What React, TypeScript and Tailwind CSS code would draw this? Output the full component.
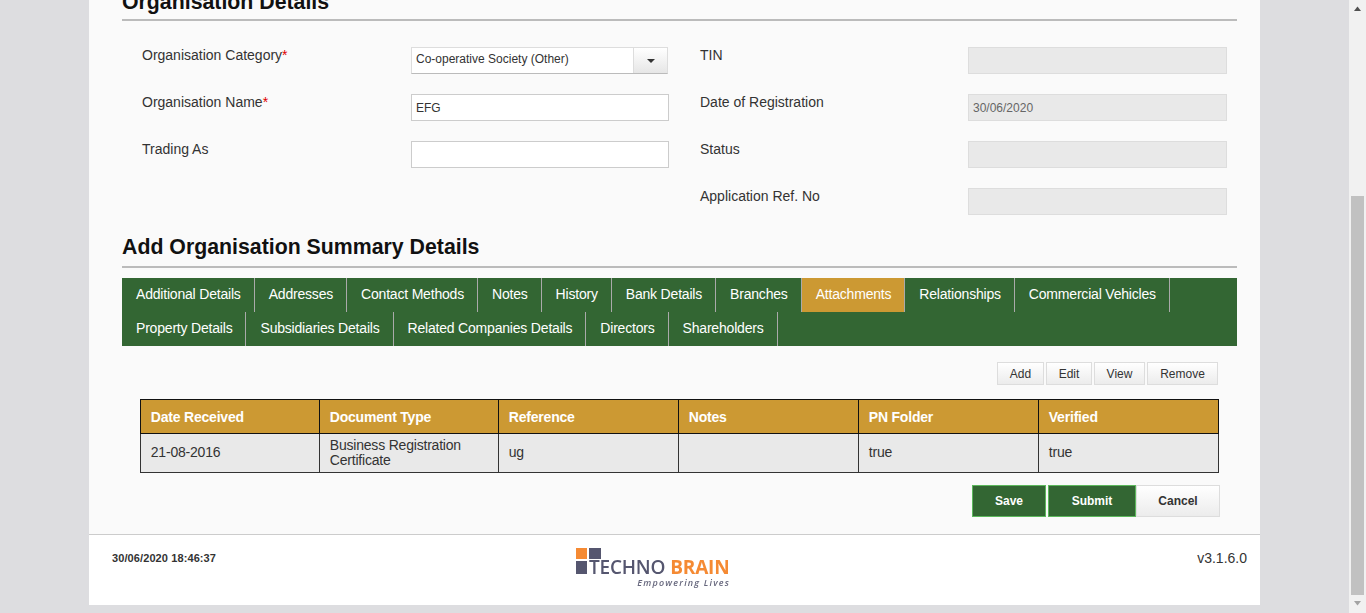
import React from "react";

const ARIAL = "font-['Liberation_Sans',Arial,sans-serif]";

const tabs = [
  "Additional Details",
  "Addresses",
  "Contact Methods",
  "Notes",
  "History",
  "Bank Details",
  "Branches",
  "Attachments",
  "Relationships",
  "Commercial Vehicles",
  "Property Details",
  "Subsidiaries Details",
  "Related Companies Details",
  "Directors",
  "Shareholders",
];

const columns = [
  { title: "Date Received", width: "w-[179px]" },
  { title: "Document Type", width: "w-[179px]" },
  { title: "Reference", width: "w-[180px]" },
  { title: "Notes", width: "w-[180px]" },
  { title: "PN Folder", width: "w-[180px]" },
  { title: "Verified", width: "w-[180px]" },
];

const row = ["21-08-2016", "Business Registration Certificate", "ug", "", "true", "true"];

const Field = ({
  label,
  required,
  labelWidth = "w-[269px]",
  children,
}: {
  label: string;
  required?: boolean;
  labelWidth?: string;
  children: React.ReactNode;
}) => (
  <div className="flex h-[27px] items-start">
    <div className={`${labelWidth} shrink-0 text-[14px] leading-[16px] text-[#333]`}>
      {label}
      {required && <span className="text-[#e00000]">*</span>}
    </div>
    {children}
  </div>
);

const TextBox = ({ value = "" }: { value?: string }) => (
  <input
    readOnly
    value={value}
    className="h-[27px] w-[258px] border border-[#ccc] bg-white px-[4px] text-[12px] text-[#333] outline-none"
  />
);

const DisabledBox = ({ value = "" }: { value?: string }) => (
  <input
    readOnly
    value={value}
    className="h-[27px] w-[259px] border border-[#ddd] bg-[#e9e9e9] px-[4px] text-[12px] text-[#666] outline-none"
  />
);

const SmallButton = ({ label, width }: { label: string; width: string }) => (
  <button
    className={`h-[23px] ${width} border border-[#ddd] bg-gradient-to-b from-white to-[#ececec] text-[12px] text-[#333]`}
  >
    {label}
  </button>
);

const Logo = () => (
  <div className="relative h-[44px] w-[154px] blur-[0.4px]">
    <div className="flex gap-[2px]">
      <div className="h-[11px] w-[11px] bg-[#f58a33]" />
      <div className="h-[11px] w-[12px] bg-[#55566f]" />
    </div>
    <div className="mt-[2px] h-[13px] w-[11px] bg-[#55566f]" />
    <div className="absolute left-[13px] top-[9px] flex font-['Open_Sans',sans-serif] text-[19px] font-semibold leading-[20px] tracking-[-0.2px] whitespace-nowrap">
      <span className="text-[#55566f]">TECHNO</span>
      <span className="ml-[5px] font-bold text-[#f58a33]">BRAIN</span>
    </div>
    <div className="absolute right-[0px] top-[29px] font-['Open_Sans',sans-serif] text-[9px] font-semibold italic leading-[12px] tracking-[1.2px] text-[#66677d] whitespace-nowrap">
      Empowering Lives
    </div>
  </div>
);

const Scrollbar = () => (
  <aside className="flex h-full w-[17px] shrink-0 flex-col items-center bg-[#f1f1f1]">
    <svg width="9" height="17" viewBox="0 0 9 17" className="shrink-0">
      <path d="M4.5 6.5 8 11H1z" fill="#505050" />
    </svg>
    <div className="mt-[179px] h-[399px] w-[13px] bg-[#c1c1c1]" />
    <svg width="9" height="17" viewBox="0 0 9 17" className="shrink-0">
      <path d="M1 6h7l-3.5 4.5z" fill="#a3a3a3" />
    </svg>
  </aside>
);

export default function App() {
  return (
    <div className={`flex h-[613px] w-[1366px] overflow-hidden bg-[#dddde0] ${ARIAL}`}>
      <main className="flex w-[1349px] justify-center">
        <div className="flex h-[605px] w-[1171px] flex-col bg-[#fafafa]">
          <section className="h-[534px] shrink-0 pl-[33px] pr-[23px]">
            <h2 className="-mt-[10px] text-[21.3px] font-bold leading-[25px] text-[#111]">
              Organisation Details
            </h2>
            <div className="mt-[4px] h-[2px] bg-[#bbb]" />

            <div className="ml-[20px] mt-[26px] flex">
              <div className="flex w-[527px] flex-col gap-[20px]">
                <Field label="Organisation Category" required>
                  <div className="flex h-[27px] w-[257px] border border-[#ddd] border-b-[#bbb] bg-white">
                    <div className="flex-1 px-[4px] text-[12px] leading-[22px] text-[#333]">
                      Co-operative Society (Other)
                    </div>
                    <div className="flex w-[34px] items-center justify-center border-l border-[#ddd] bg-gradient-to-b from-white to-[#e6e6e6]">
                      <svg width="8" height="4" viewBox="0 0 8 4">
                        <path d="M0 0h8L4 4z" fill="#333" />
                      </svg>
                    </div>
                  </div>
                </Field>
                <Field label="Organisation Name" required>
                  <TextBox value="EFG" />
                </Field>
                <Field label="Trading As">
                  <TextBox />
                </Field>
              </div>
              <div className="ml-[31px] flex w-[527px] flex-col gap-[20px]">
                <Field label="TIN" labelWidth="w-[268px]">
                  <DisabledBox />
                </Field>
                <Field label="Date of Registration" labelWidth="w-[268px]">
                  <DisabledBox value="30/06/2020" />
                </Field>
                <Field label="Status" labelWidth="w-[268px]">
                  <DisabledBox />
                </Field>
                <Field label="Application Ref. No" labelWidth="w-[268px]">
                  <DisabledBox />
                </Field>
              </div>
            </div>

            <h2 className="mt-[20px] text-[21.3px] font-bold leading-[25px] text-[#111]">
              Add Organisation Summary Details
            </h2>
            <div className="mt-[6px] h-[2px] bg-[#bbb]" />

            <nav className="mt-[10px] flex flex-wrap bg-[#336633]">
              {tabs.map((tab) => (
                <div
                  key={tab}
                  className={`h-[34px] border-r border-[#aaa] pl-[14px] pr-[13px] text-[14px] leading-[32px] tracking-[-0.195px] text-white ${
                    tab === "Attachments" ? "bg-[#cc9933]" : ""
                  }`}
                >
                  {tab}
                </div>
              ))}
            </nav>

            <div className="mr-[19px] mt-[16px] flex justify-end gap-[2px]">
              <SmallButton label="Add" width="w-[47px]" />
              <SmallButton label="Edit" width="w-[46px]" />
              <SmallButton label="View" width="w-[51px]" />
              <SmallButton label="Remove" width="w-[71px]" />
            </div>

            <table className="ml-[18px] mt-[14px] w-[1078px] table-fixed border-collapse text-[14px] tracking-[-0.2px]">
              <thead>
                <tr className="h-[34px] bg-[#cc9933]">
                  {columns.map((col) => (
                    <th
                      key={col.title}
                      className={`${col.width} border border-[#111] pl-[9.75px] pr-[9px] pt-[1px] text-left font-bold text-white`}
                    >
                      {col.title}
                    </th>
                  ))}
                </tr>
              </thead>
              <tbody>
                <tr className="h-[39px] bg-[#e9e9e9]">
                  {row.map((cell, i) => (
                    <td
                      key={i}
                      className={`border border-[#333] pl-[9.75px] pr-[9px] leading-[15px] text-[#333] ${
                        i === 1 ? "py-0" : "pt-0 pb-[2px]"
                      }`}
                    >
                      {cell}
                    </td>
                  ))}
                </tr>
              </tbody>
            </table>

            <div className="mr-[17px] mt-[12px] flex justify-end">
              <button className="h-[32px] w-[74px] border border-[#5cb85c] bg-[#336633] text-[12px] font-bold text-white">
                Save
              </button>
              <button className="ml-[2px] h-[32px] w-[88px] border border-[#5cb85c] bg-[#336633] text-[12px] font-bold text-white">
                Submit
              </button>
              <button className="h-[32px] w-[84px] border border-[#ddd] bg-gradient-to-b from-white to-[#ececec] text-[12px] font-bold text-[#333]">
                Cancel
              </button>
            </div>
          </section>

          <footer className="flex flex-1 items-start border-t border-[#ccc] bg-white">
            <div className="ml-[23px] mt-[17px] w-[464px] text-[11px] font-bold leading-[13px] tracking-[0.1px] text-[#333]">
              30/06/2020 18:46:37
            </div>
            <div className="mt-[13px]">
              <Logo />
            </div>
            <div className="ml-auto mr-[13px] mt-[15px] text-[14px] leading-[16px] text-[#333]">
              v3.1.6.0
            </div>
          </footer>
        </div>
      </main>
      <Scrollbar />
    </div>
  );
}
